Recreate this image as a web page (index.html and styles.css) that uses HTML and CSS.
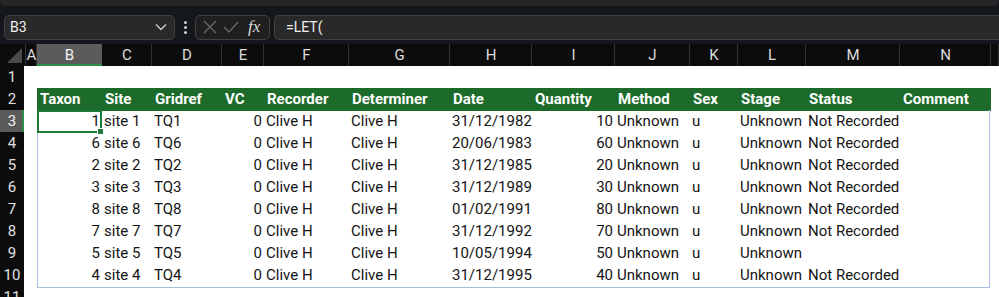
FILE: index.html
```html
<!DOCTYPE html>
<html lang="en">
<head>
  <meta charset="UTF-8">
  <title>Records - Sheet</title>
  <link rel="stylesheet" href="styles.css">
</head>
<body>

<div class="ribbon"><div class="ribbon-box"></div></div>

<div class="formula-bar">
  <div class="name-box">
    <span>B3</span>
    <svg width="12" height="8" viewBox="0 0 12 8"><path d="M1 1.5 L6 6.5 L11 1.5" fill="none" stroke="#cfcfcf" stroke-width="1.3"/></svg>
  </div>
  <div class="dots"><i></i><i></i><i></i></div>
  <div class="fx-box">
    <svg width="16" height="16" viewBox="0 0 16 16"><path d="M2 2 L14 14 M14 2 L2 14" stroke="#6a6a6a" stroke-width="1.3"/></svg>
    <svg width="18" height="16" viewBox="0 0 18 16"><path d="M2 8 L7 13 L16 3" fill="none" stroke="#6a6a6a" stroke-width="1.3"/></svg>
    <span class="fx">fx</span>
  </div>
  <div class="formula-input">=LET(</div>
</div>

<div class="sheet">
  <div class="row col-heads">
    <div class="corner"><svg width="20" height="18" viewBox="0 0 20 18"><path d="M19 2 L19 17 L4 17 Z" fill="#4a4a4a"/></svg></div>
    <div>A</div><div class="sel-col">B</div><div>C</div><div>D</div><div>E</div><div>F</div><div>G</div>
    <div>H</div><div>I</div><div>J</div><div>K</div><div>L</div><div>M</div><div>N</div><div></div>
  </div>
  <div id="rows"></div>
</div>

<script>
  const data = [
    [1, 'site 1', 'TQ1', '31/12/1982', 10, 'Not Recorded'],
    [6, 'site 6', 'TQ6', '20/06/1983', 60, 'Not Recorded'],
    [2, 'site 2', 'TQ2', '31/12/1985', 20, 'Not Recorded'],
    [3, 'site 3', 'TQ3', '31/12/1989', 30, 'Not Recorded'],
    [8, 'site 8', 'TQ8', '01/02/1991', 80, 'Not Recorded'],
    [7, 'site 7', 'TQ7', '31/12/1992', 70, 'Not Recorded'],
    [5, 'site 5', 'TQ5', '10/05/1994', 50, ''],
    [4, 'site 4', 'TQ4', '31/12/1995', 40, 'Not Recorded']
  ];
  const heads = ['Taxon', 'Site', 'Gridref', 'VC', 'Recorder', 'Determiner', 'Date', 'Quantity', 'Method', 'Sex', 'Stage', 'Status', 'Comment'];
  const rows = document.getElementById('rows');
  let html = '';

  html += '<div class="row"><div class="rh">1</div>' + '<div></div>'.repeat(15) + '</div>';
  html += '<div class="row"><div class="rh">2</div><div></div>' +
    heads.map(h => `<div class="th">${h}</div>`).join('') + '<div></div></div>';

  data.forEach((r, i) => {
    const n = i + 3;
    const last = i === data.length - 1 ? ' last' : '';
    html += `
      <div class="row body${last}">
        <div class="rh${n === 3 ? ' sel-row' : ''}">${n}</div>
        <div></div>
        <div class="num first${n === 3 ? ' active' : ''}">${r[0]}</div>
        <div>${r[1]}</div>
        <div>${r[2]}</div>
        <div class="num">0</div>
        <div>Clive H</div>
        <div>Clive H</div>
        <div>${r[3]}</div>
        <div class="num">${r[4]}</div>
        <div>Unknown</div>
        <div>u</div>
        <div>Unknown</div>
        <div>${r[5]}</div>
        <div class="end"></div>
        <div></div>
      </div>`;
  });

  // row 11 is only half visible at the bottom edge
  html += '<div class="row"><div class="rh">11</div></div>';
  rows.innerHTML = html;
</script>

</body>
</html>
```

FILE: styles.css
```css
* {
  margin: 0;
  padding: 0;
  box-sizing: border-box;
}

body {
  background-color: #14181d;
  font-family: Roboto, 'Liberation Sans', sans-serif;
  width: 999px;
  height: 297px;
  overflow: hidden;
}

/* Ribbon remnant at the very top */
.ribbon {
  height: 14px;
}

.ribbon-box {
  height: 6px;
  background-color: #262626;
  border-radius: 0 0 6px 6px;
}

/* Formula bar */
.formula-bar {
  display: flex;
  align-items: center;
  height: 26px;
  padding-left: 4px;
}

.name-box,
.fx-box,
.formula-input {
  height: 25px;
  background-color: #292929;
  border: 1px solid #414141;
  border-radius: 5px;
  color: #f0f0f0;
  font-size: 14px;
  display: flex;
  align-items: center;
}

.name-box {
  width: 171px;
  padding: 0 7px 0 5px;
  justify-content: space-between;
}

.dots {
  width: 20px;
  display: flex;
  flex-direction: column;
  align-items: center;
  gap: 2px;
}

.dots i {
  width: 3px;
  height: 3px;
  border-radius: 50%;
  background-color: #d0d0d0;
}

.fx-box {
  width: 75px;
  padding: 0 4px 0 6px;
  gap: 4px;
  background-color: #1f1f1f;
}

.fx {
  font-family: 'Liberation Serif', serif;
  font-style: italic;
  font-size: 17px;
  color: #d8d8d8;
  margin-left: 4px;
}

.formula-input {
  flex: 1;
  margin-left: 4px;
  padding-left: 11px;
  border-right: none;
  border-radius: 5px 0 0 5px;
}

/* Sheet grid */
.sheet {
  margin-top: 4px;
  background-color: #ffffff;
}

.row {
  display: grid;
  grid-template-columns: 26px 11px 65px 50px 70px 42px 85px 101px 82px 83px 75px 48px 68px 94px 91px 1fr;
  height: 22px;
  font-size: 15px;
  color: #141414;
  line-height: 23px;
}

.row > div {
  white-space: nowrap;
  padding-left: 2px;
}

.col-heads {
  background-color: #0c0c0c;
  color: #dcdcdc;
  line-height: 22px;
}

.col-heads > div {
  text-align: center;
  padding: 0;
  box-shadow: inset -1px 0 0 #343434;
}

.col-heads .corner {
  display: flex;
  align-items: center;
  justify-content: center;
}

.col-heads .sel-col {
  background-color: #5b5b5b;
  color: #f2f2f2;
  box-shadow: inset 0 -2px 0 #2e8b4a;
}

.rh {
  background-color: #0c0c0c;
  color: #e0e0e0;
  text-align: center;
  padding: 0 !important;
  box-shadow: inset 0 -1px 0 #2e2e2e;
  width: 24px;
}

.rh.sel-row {
  background-color: #5b5b5b;
  color: #f2f2f2;
  box-shadow: inset -2px 0 0 #2e8b4a;
}

.th {
  background-color: #1d6b2a;
  color: #ffffff;
  font-weight: 700;
  padding-left: 3px !important;
}

.num {
  text-align: right;
  padding-right: 2px;
}

.body .first {
  box-shadow: inset 1px 0 0 #a8bbe0;
}

.body .end {
  box-shadow: inset -1px 0 0 #a8bbe0;
  width: 90px;
}

.body.last > div:not(.rh):not(:nth-child(2)):not(:last-child) {
  border-bottom: 1px solid #a8bbe0;
}

.body .active {
  position: relative;
  box-shadow: inset 0 0 0 2px #1f7a3a;
}

.body .active::after {
  content: '';
  position: absolute;
  right: -2px;
  bottom: -2px;
  width: 5px;
  height: 5px;
  background-color: #1f7a3a;
  border: 1px solid #ffffff;
}
```
